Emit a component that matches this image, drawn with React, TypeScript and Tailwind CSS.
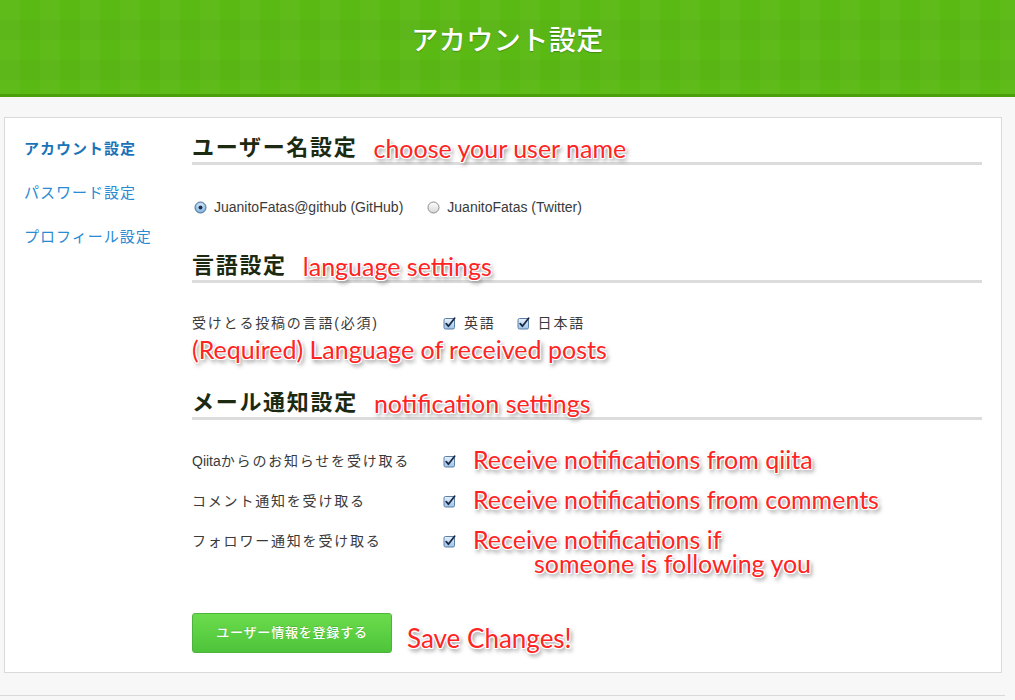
import React from "react";

const ann =
  "text-[#ff2424] [font-family:Lato,'DejaVu_Sans',sans-serif] [text-shadow:1px_0_0_#fff,-1px_0_0_#fff,0_1px_0_#fff,0_-1px_0_#fff,1px_1px_0_#fff,-1px_-1px_0_#fff,1px_-1px_0_#fff,-1px_1px_0_#fff,2px_3px_4px_rgba(0,0,0,0.55)]";

const jp = "tracking-[1.8px]";

function Check() {
  return (
    <svg width="13" height="13" viewBox="0 0 13 13" className="shrink-0">
      <defs>
        <linearGradient id="cbg" x1="0" y1="0" x2="0" y2="1">
          <stop offset="0" stopColor="#eaf3fb" />
          <stop offset="1" stopColor="#9cc3e6" />
        </linearGradient>
      </defs>
      <rect x="1" y="1.5" width="10.5" height="10.5" rx="1.5" fill="url(#cbg)" stroke="#5d7ea6" strokeWidth="1" />
      <path d="M3.2 6.6 L5.4 9.2 L11.6 1.2" fill="none" stroke="#1c2a4a" strokeWidth="1.8" strokeLinecap="round" strokeLinejoin="round" />
    </svg>
  );
}

function Radio({ on }: { on: boolean }) {
  return (
    <svg width="13" height="13" viewBox="0 0 13 13" className="shrink-0">
      <defs>
        <radialGradient id="rbOn" cx="0.5" cy="0.35" r="0.7">
          <stop offset="0" stopColor="#e4f1fc" />
          <stop offset="1" stopColor="#6aa6dc" />
        </radialGradient>
        <linearGradient id="rbOff" x1="0" y1="0" x2="0" y2="1">
          <stop offset="0" stopColor="#ffffff" />
          <stop offset="1" stopColor="#d6d6d6" />
        </linearGradient>
      </defs>
      <circle cx="6.5" cy="6.5" r="5.5" fill={on ? "url(#rbOn)" : "url(#rbOff)"} stroke={on ? "#4b6e95" : "#8c8c8c"} strokeWidth="1" />
      {on && <circle cx="6.5" cy="6.5" r="2" fill="#1b2d4d" />}
    </svg>
  );
}

function Heading({ jpText, en }: { jpText: string; en: string }) {
  return (
    <div className="flex items-end h-[28px] border-b-[3px] border-[#dcdcdc] box-content">
      <span className="text-[22px] font-bold text-[#1c2a12] leading-[28px] tracking-[1.7px]">{jpText}</span>
      <span className={`ml-[16px] text-[25px] leading-[28px] ${ann}`}>{en}</span>
    </div>
  );
}

function NotifRow({ label, pre, en, en2 }: { label: string; pre?: string; en: string; en2?: string }) {
  return (
    <div className="flex items-start">
      <div className="w-[251px] leading-[20px] text-[14px] text-[#3a3a3a] whitespace-nowrap">
        {pre}
        <span className={jp}>{label}</span>
      </div>
      <div className="h-[20px] flex items-center">
        <Check />
      </div>
      <div className={`ml-[17px] -mt-[4px] text-[25px] leading-[24px] ${ann}`}>
        {en2 ? (
          <p className="w-[340px]">
            {en}
            <br />
            <span className="pl-[61px]">{en2}</span>
          </p>
        ) : (
          <p>{en}</p>
        )}
      </div>
    </div>
  );
}

export default function App() {
  return (
    <div className="w-[1015px] min-h-[700px] bg-[#f7f7f7] [font-family:'Liberation_Sans','Noto_Sans_CJK_JP',sans-serif] overflow-hidden">
      <header className="h-[94px] bg-[#5bb914] border-b-[3px] border-[#4a9f0a] box-content flex items-center justify-center bg-[linear-gradient(90deg,rgba(255,255,255,0.025)_50%,transparent_50%),linear-gradient(0deg,rgba(0,0,0,0.02)_50%,transparent_50%)] bg-[length:40px_40px]">
        <h1 className="text-white text-[27px] font-medium tracking-[0.5px] -mt-[12px] [text-shadow:0_1px_1px_rgba(0,0,0,0.25)]">
          アカウント設定
        </h1>
      </header>

      <div className="ml-[4px] mt-[20px] w-[998px] h-[556px] bg-white border border-[#d9d9d9] flex">
        <nav className="w-[187px] pl-[19px] pt-[21px] flex flex-col gap-[24px] text-[15px] leading-[20px] tracking-[1px]">
          <a className="font-bold text-[#1a73b8]">アカウント設定</a>
          <a className="text-[#2a8ad2]">パスワード設定</a>
          <a className="text-[#2a8ad2]">プロフィール設定</a>
        </nav>

        <main className="w-[790px] pt-[16px] flex flex-col">
          <Heading jpText="ユーザー名設定" en="choose your user name" />

          <div className="mt-[32px] flex items-center h-[20px] text-[14px] text-[#3a3a3a]">
            <span className="ml-[2px]"><Radio on /></span>
            <span className="ml-[7px]">JuanitoFatas@github (GitHub)</span>
            <span className="ml-[24px]"><Radio on={false} /></span>
            <span className="ml-[7px]">JuanitoFatas (Twitter)</span>
          </div>

          <div className="mt-[35px]">
            <Heading jpText="言語設定" en="language settings" />
          </div>

          <div className="mt-[30px] flex items-center h-[20px] text-[14px] text-[#3a3a3a]">
            <div className={`w-[251px] ${jp}`}>受けとる投稿の言語(必須)</div>
            <Check />
            <span className={`ml-[8px] ${jp}`}>英語</span>
            <span className="ml-[21px]"><Check /></span>
            <span className={`ml-[8px] ${jp}`}>日本語</span>
          </div>
          <div className={`mt-[2px] text-[25px] leading-[28px] ${ann}`}>(Required) Language of received posts</div>

          <div className="mt-[26px]">
            <Heading jpText="メール通知設定" en="notification settings" />
          </div>

          <div className="mt-[31px] flex flex-col gap-[20px]">
            <NotifRow pre="Qiita" label="からのお知らせを受け取る" en="Receive notifications from qiita" />
            <NotifRow label="コメント通知を受け取る" en="Receive notifications from comments" />
            <NotifRow label="フォロワー通知を受け取る" en="Receive notifications if" en2="someone is following you" />
          </div>

          <div className="mt-[38px] flex items-center">
            <button className="w-[200px] h-[40px] rounded-[3px] border border-[#4cb43c] bg-[linear-gradient(#6bdc4c,#4ec43b)] text-white text-[13px] font-medium tracking-[0.8px] [text-shadow:0_-1px_0_rgba(0,0,0,0.15)]">
              ユーザー情報を登録する
            </button>
            <span className={`ml-[15px] mt-[10px] text-[26px] leading-[28px] ${ann}`}>Save Changes!</span>
          </div>
        </main>
      </div>

      <div className="mt-[22px] w-[1005px] border-t border-[#d9d9d9]" />
    </div>
  );
}
